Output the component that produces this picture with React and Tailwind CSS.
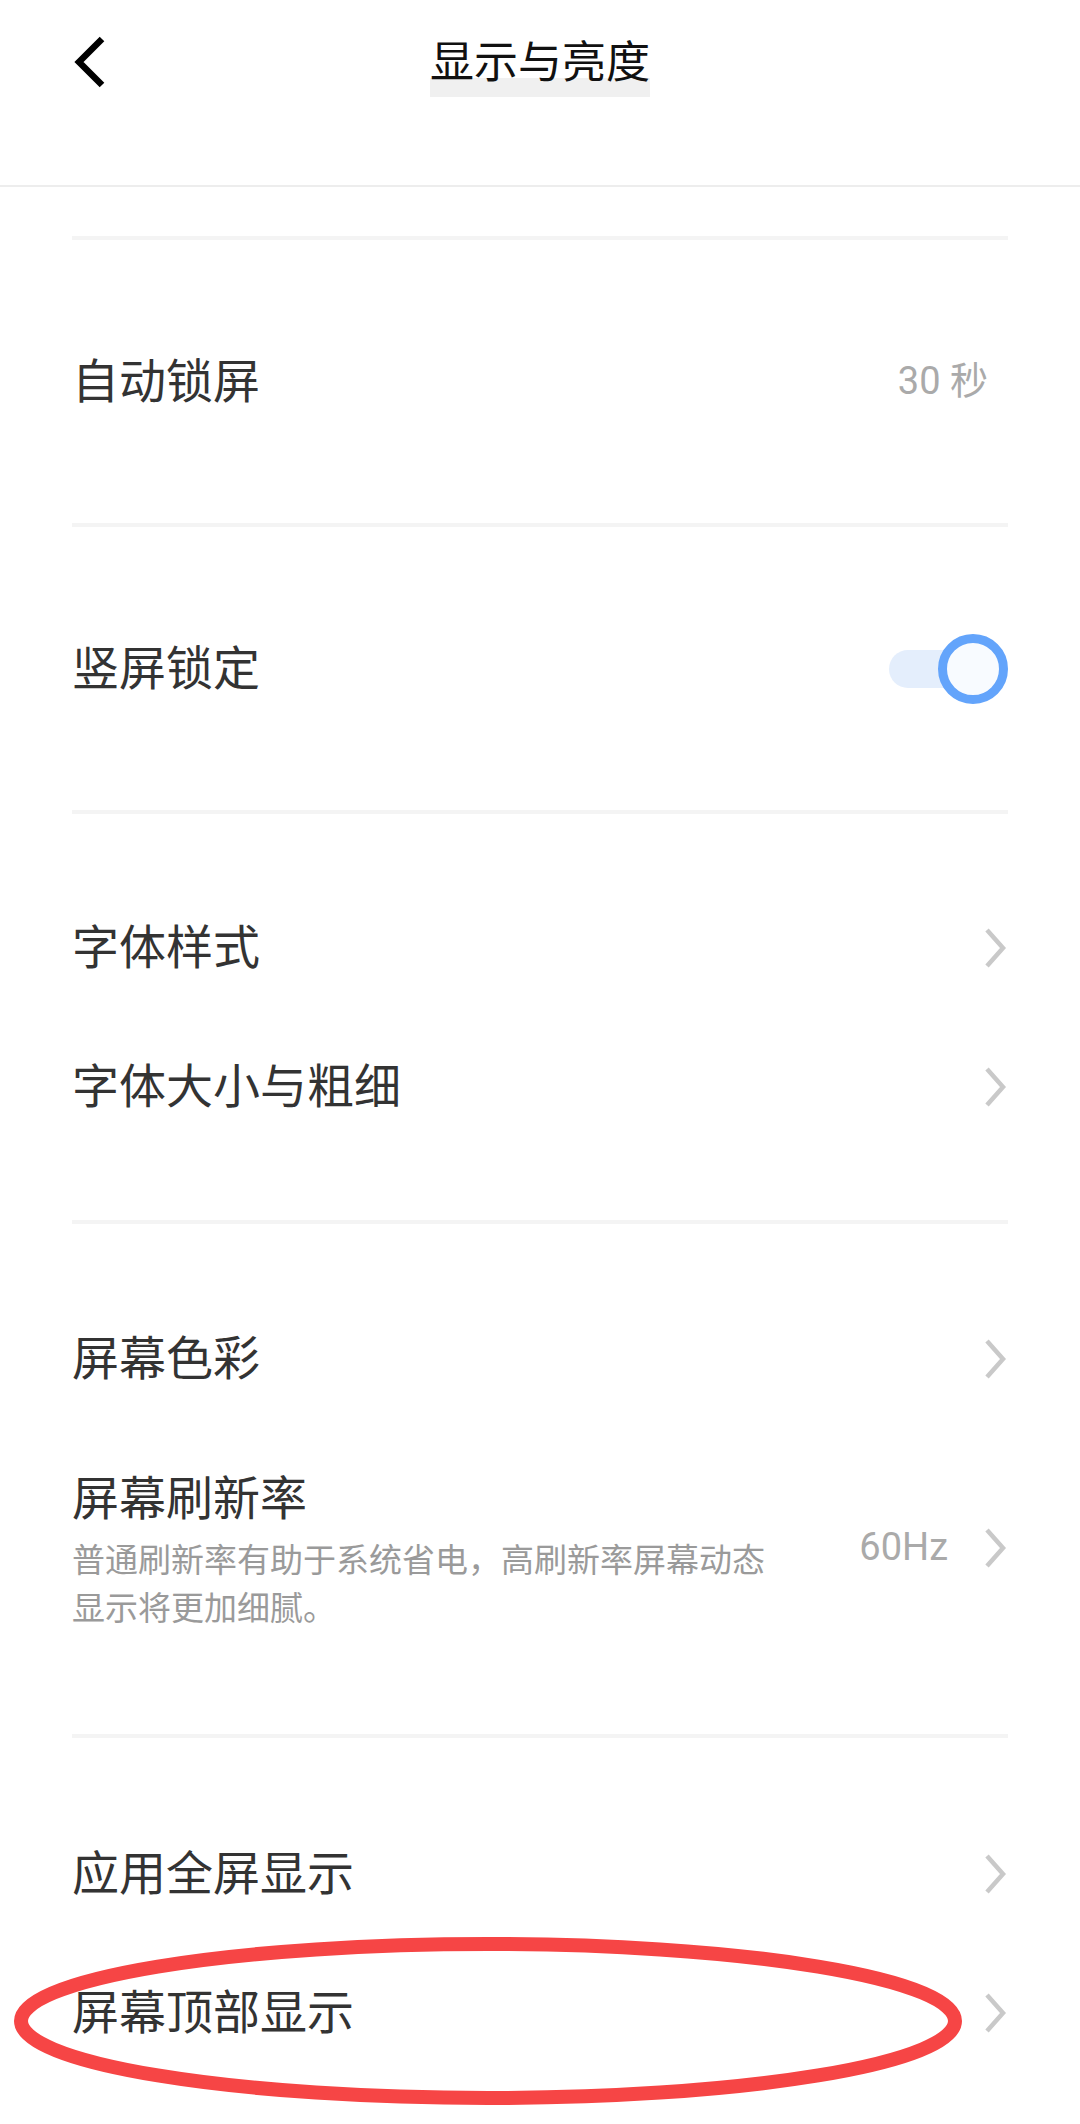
import React from "react";

const Chevron = () => (
  <svg width="26" height="40" viewBox="0 0 26 40" className="shrink-0">
    <path d="M5 2 L21 20 L5 38" fill="none" stroke="#c9c9c9" strokeWidth="4.5" strokeLinejoin="miter" />
  </svg>
);

const Divider = () => <div className="mx-[72px] h-[4px] bg-[#f4f4f4]" />;

const Label = ({ children }) => (
  <span className="pb-[8px] text-[47px] leading-[60px] text-[#333333]">{children}</span>
);

const Row = ({ label, children }) => (
  <div className="flex h-[139px] items-center justify-between">
    <Label>{label}</Label>
    {children}
  </div>
);

const Toggle = () => (
  <div className="relative h-[70px] w-[119px]">
    <div className="absolute left-0 top-[16px] h-[38px] w-[100px] rounded-full bg-[#e4eefc]" />
    <div className="absolute right-0 top-0 h-[70px] w-[70px] rounded-full border-[9px] border-[#63a4fb] bg-[#f8fbff]" />
  </div>
);

const App = () => {
  return (
    <div className="relative h-[2124px] w-[1080px] overflow-hidden bg-white font-['Noto_Sans_CJK_SC',sans-serif]">
      {/* header */}
      <div className="grid h-[185px] grid-cols-[1fr_auto_1fr] items-start">
        <div className="pl-[70px] pt-[36px]">
          <svg width="40" height="52" viewBox="0 0 40 52">
            <path d="M32 3 L9 26 L32 49" fill="none" stroke="#000" strokeWidth="6.5" strokeLinejoin="miter" />
          </svg>
        </div>
        <div className="pt-[37px]">
          <span className="inline-block bg-[linear-gradient(to_bottom,transparent_41px,#f0f0f0_41px)] pb-[16px] text-[44px] leading-[44px] text-[#111111]">
            显示与亮度
          </span>
        </div>
        <div />
      </div>
      <div className="h-[2px] bg-[#ededed]" />
      <div className="h-[49px]" />
      <Divider />

      <div className="flex h-[283px] items-center justify-between px-[72px]">
        <Label>自动锁屏</Label>
        <span className="pr-[20px] font-['Roboto','Noto_Sans_CJK_SC',sans-serif] text-[38px] text-[#aaaaaa]">30 秒</span>
      </div>
      <Divider />

      <div className="flex h-[283px] items-center justify-between px-[72px]">
        <Label>竖屏锁定</Label>
        <Toggle />
      </div>
      <Divider />

      <div className="px-[72px] py-[64px]">
        <Row label="字体样式">
          <Chevron />
        </Row>
        <Row label="字体大小与粗细">
          <Chevron />
        </Row>
      </div>
      <Divider />

      <div className="px-[72px] pb-[64px] pt-[65px]">
        <Row label="屏幕色彩">
          <Chevron />
        </Row>
        <div className="flex items-center justify-between pb-[40px] pt-[37px]">
          <div className="flex flex-col">
            <span className="text-[47px] leading-[60px] text-[#333333]">屏幕刷新率</span>
            <p className="mt-[9px] max-w-[710px] text-[33px] leading-[48px] text-[#9a9a9a]">
              普通刷新率有助于系统省电，高刷新率屏幕动态显示将更加细腻。
            </p>
          </div>
          <div className="flex items-center gap-[34px]">
            <span className="font-['Roboto','Noto_Sans_CJK_SC',sans-serif] text-[38px] text-[#aaaaaa]">60Hz</span>
            <Chevron />
          </div>
        </div>
      </div>
      <Divider />

      <div className="px-[72px] pt-[66px]">
        <Row label="应用全屏显示">
          <Chevron />
        </Row>
        <Row label="屏幕顶部显示">
          <Chevron />
        </Row>
      </div>

      {/* red annotation ellipse */}
      <svg className="pointer-events-none absolute left-0 top-[1930px]" width="980" height="190" viewBox="0 0 980 190">
        <ellipse cx="488" cy="91" rx="467" ry="77" fill="none" stroke="#f64545" strokeWidth="14" />
      </svg>
    </div>
  );
};

export default App;
